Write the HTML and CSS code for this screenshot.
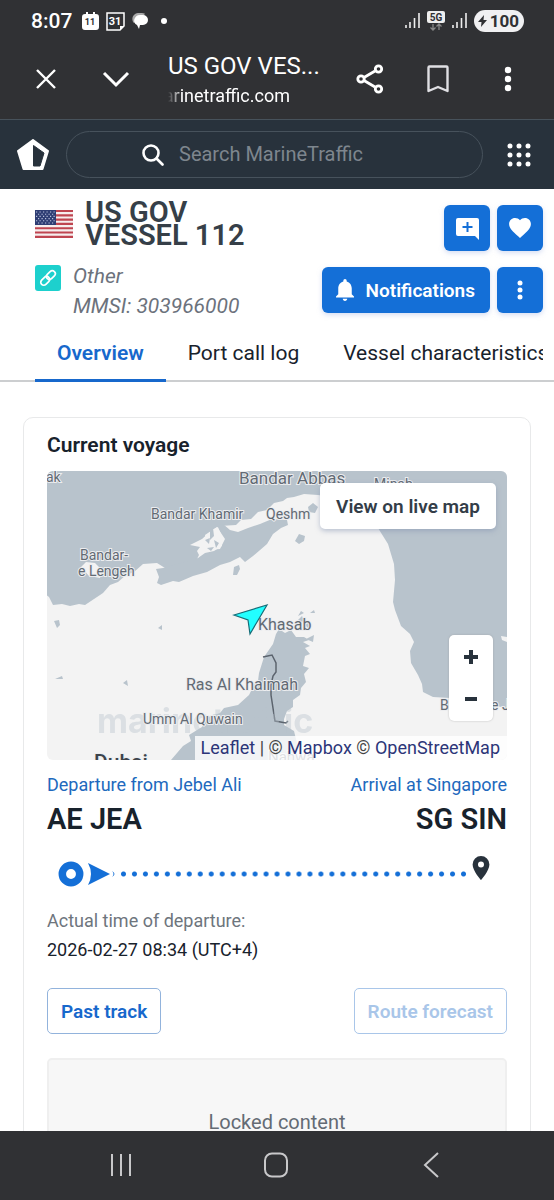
FILE: index.html
```html
<!DOCTYPE html>
<html lang="en">
<head>
<meta charset="utf-8">
<meta name="viewport" content="width=device-width, initial-scale=1">
<title>US GOV VESSEL 112</title>
<link rel="stylesheet" href="styles.css">
</head>
<body>
<div class="status">
  <span class="clock">8:07</span>
  <svg width="17" height="18" viewBox="0 0 17 18"><path fill="#fff" d="M3 2h1V0h2v2h5V0h2v2h1a3 3 0 0 1 3 3v10a3 3 0 0 1-3 3H3a3 3 0 0 1-3-3V5a3 3 0 0 1 3-3z"/><text x="8" y="13" text-anchor="middle" class="cal dark">11</text></svg>
  <svg width="19" height="19" viewBox="0 0 19 19"><path fill="none" stroke="#fff" stroke-width="1.5" d="M1 1h17v13l-4 4H1z"/><path fill="#fff" d="M18 14l-4 4v-4z"/><text x="9" y="13" text-anchor="middle" class="cal big">31</text></svg>
  <svg width="17" height="17" viewBox="0 0 17 17"><path fill="#aaa" d="M2 10C-1 7 0 1 6 0h4c2 0 3 1 3 1z"/><path fill="#fff" d="M8 2h3a5 5 0 0 1 0 10h-3l-1 4-2-4C0 10 2 2 8 2z"/></svg>
  <span class="dot"></span>
  <span class="spacer"></span>
  <svg width="15" height="16" viewBox="0 0 15 16" stroke="#eee" stroke-width="1.6"><path d="M1 12v3M5 9v6M9.500 5v10M14 0v15"/></svg>
  <svg width="18" height="20" viewBox="0 0 18 20"><rect width="18" height="12" rx="2" fill="#eee"/><text x="9" y="10" text-anchor="middle" class="net">5G</text><path fill="none" stroke="#888" stroke-width="1.3" d="M6 13v6M3.500 16.500 6 19l2.500-2.500M12 19v-6M9.500 15.500 12 13l2.500 2.500"/></svg>
  <svg width="15" height="16" viewBox="0 0 15 16" stroke="#eee" stroke-width="1.6"><path d="M1 12v3M5 9v6M9.500 5v10M14 0v15"/></svg>
  <span class="battery"><svg width="9" height="12" viewBox="0 0 9 12"><path fill="#303134" d="M6 0 0 7h3.500L3 12l6-7H5.500z"/></svg>100</span>
</div>
<div class="browser">
  <button class="bare" aria-label="Close"><svg width="22" height="22" viewBox="0 0 22 22"><path stroke="#fff" stroke-width="2.400" d="m2 2 18 18M20 2 2 20"/></svg></button>
  <button class="bare chevron" aria-label="Minimise"><svg width="28" height="18" viewBox="0 0 28 18"><path fill="none" stroke="#fff" stroke-width="3" d="m2 3 12 12L26 3"/></svg></button>
  <div class="site"><div class="site-title">US GOV VES...</div><div class="site-url">arinetraffic.com</div></div>
  <button class="bare" aria-label="Share"><svg width="28" height="30" viewBox="0 0 28 30" fill="none" stroke="#fff" stroke-width="2.800"><path d="M8 13.500 19 7M8 16.500 19 23"/><circle cx="5" cy="15" r="3.200"/><circle cx="22.500" cy="5" r="3.200"/><circle cx="22.500" cy="25" r="3.200"/></svg></button>
  <button class="bare bookmark" aria-label="Bookmark"><svg width="22" height="28" viewBox="0 0 22 28"><path fill="none" stroke="#dfdfe3" stroke-width="2.400" stroke-linejoin="round" d="M1.500 2.500q0-1 1-1h17q1 0 1 1v23.500l-9.500-4-9.500 4z"/></svg></button>
  <button class="bare more" aria-label="More"><svg width="8" height="26" viewBox="0 0 8 26" fill="#fff"><circle cx="4" cy="4" r="3.200"/><circle cx="4" cy="13" r="3.200"/><circle cx="4" cy="22" r="3.200"/></svg></button>
</div>
<header class="topbar">
  <a href="#" aria-label="Home" class="logo"><svg width="32" height="32" viewBox="0 0 32 32"><path fill="#fff" stroke="#fff" stroke-width="2" stroke-linejoin="round" d="M16 1 31 12l-5.500 18h-19L1 12z"/><path fill="#28323c" stroke="#28323c" stroke-linejoin="round" d="M16.500 6.500 27 14l-4 13h-6.500z"/></svg></a>
  <label class="search"><svg width="22" height="22" viewBox="0 0 22 22" fill="none" stroke="#fff" stroke-width="2.600"><circle cx="9" cy="9" r="7.500"/><path stroke-linecap="round" d="m14.500 14.500 6 6"/></svg><input type="search" placeholder="Search MarineTraffic" aria-label="Search MarineTraffic"></label>
  <button class="bare apps" aria-label="Apps"><svg width="24" height="24" viewBox="0 0 24 24"><path stroke="#fff" stroke-width="5" stroke-linecap="round" d="M3 3h0M12 3h0M21 3h0M3 12h0M12 12h0M21 12h0M3 21h0M12 21h0M21 21h0"/></svg></button>
</header>
<main>
  <section class="vessel">
    <div class="ident">
      <div class="name-row">
        <svg width="38" height="28" viewBox="0 0 38 28" role="img" aria-label="United States"><path fill="#f6eeee" d="M0 0h38v28H0z"/><path stroke="#bf4550" stroke-width="2.150" d="M0 1h38M0 5.300h38M0 9.600h38M0 13.900h38M0 18.200h38M0 22.500h38M0 26.900h38"/><path fill="#2f3e74" d="M0 0h21v15H0z"/><path stroke="#b9c1dc" stroke-width="1.100" stroke-dasharray="1.200 2.300" d="M1 2h19M3 4.200h17M1 6.400h19M3 8.600h17M1 10.800h19M3 13h17"/></svg>
        <h1>US GOV VESSEL 112</h1>
      </div>
      <div class="meta-row">
        <span class="type"><svg width="18" height="18" viewBox="0 0 18 18" fill="none" stroke="#fff" stroke-width="1.700"><g transform="rotate(-45 9 9)"><rect x="0" y="6" width="10" height="6" rx="3"/><rect x="8" y="6" width="10" height="6" rx="3"/></g></svg></span>
        <p>Other<br>MMSI: 303966000</p>
      </div>
    </div>
    <div class="actions">
      <div class="row"><button class="btn sq" aria-label="Add note"><svg width="23" height="23" viewBox="0 0 23 23"><path fill="#fff" d="M2 1h19q2 0 2 2v20l-4-4H2q-2 0-2-2V3q0-2 2-2z"/><path stroke="#146fd7" stroke-width="2" d="M11.500 5v10M6.500 10h10"/></svg></button><button class="btn sq" aria-label="Favourite"><svg width="22" height="20" viewBox="2 3 20 18.350"><path fill="#fff" d="m12 21.350-1.450-1.320C5.400 15.360 2 12.280 2 8.500 2 5.420 4.420 3 7.500 3c1.740 0 3.410.810 4.500 2.090C13.090 3.810 14.760 3 16.500 3 19.580 3 22 5.420 22 8.500c0 3.780-3.400 6.860-8.550 11.540z"/></svg></button></div>
      <div class="row"><button class="btn"><svg width="18" height="22" viewBox="4 2.500 16 19.500"><path fill="#fff" d="M12 22c1.100 0 2-.900 2-2h-4c0 1.100.890 2 2 2zm6-6v-5c0-3.070-1.640-5.640-4.500-6.320V4a1.500 1.500 0 0 0-3 0v.680C7.630 5.360 6 7.920 6 11v5l-2 2v1h16v-1z"/></svg>Notifications</button><button class="btn sq" aria-label="More actions"><svg width="6" height="20" viewBox="0 0 6 20" fill="#fff"><circle cx="3" cy="3" r="2.500"/><circle cx="3" cy="10" r="2.500"/><circle cx="3" cy="17" r="2.500"/></svg></button></div>
    </div>
  </section>
  <nav class="tabs"><div class="tab-list"><a href="#" class="active">Overview</a><a href="#">Port call log</a><a href="#">Vessel characteristics</a></div></nav>
  <article class="card">
    <h2>Current voyage</h2>
    <div class="map">
      <svg class="chart" viewBox="47 471 460 289" preserveAspectRatio="xMidYMid slice">
        <path fill="#f3f3f3" d="M47 471h460v289H47z"/>
        <g fill="#b8c3cc">
          <path d="M47 471H507V637l-6-1 1 4 5 2v66l-57-10-17-1-10-5-1-8-4-9-7-12-1-12 4-9-4-8-9-8-6-16-2-8 2-22-1-16-6-20-10-16-20-24-20-6-20-3-14-1-10 3-7 1-4 3-9 2-7 7-9 2-7 7-10 1-5 5-16 1-8 4-10 9-12 6 10 2-3 4 2 4-3 6-7 5-12 4-12-2-8-5-14 1-9 8-8 3-8 7-8 3-7 8-9 6-9 6-6-1-9 2-8-2-9 1-4-8-7-5H47z"/>
          <path d="m156 569 3 8-2 6 4 2 12-4 6 1 14-6 14-4 13-7 10-3 10-5 5 5 8-6 14-12 6-10 8-6 7-3-1-5-15-1-12 5-12 4-10 4-8-2-7-6-6 1 4 9 1 12-8 5-9 2-7 5-17 5-18 5zM234 567l5-2 1 4-3 6-4 0zM308 507l5-4 5 4-3 6-6-1zM295 541l4-7 6 2-1 5-5 3zM54 621l5-1 1 5-3 3zM158 628l4-3 0 5zM55 679l7-3 1 3zM123 683l4-3 1 6z"/>
          <path d="m171 760 12-14 8-5-2-6 13-8 6-10 12-4 4-5 14-3 11-10 6-12 3-2 1-8 5-16 9-13 3-10 3-5 6 4 6-3 5 7 8 0 5 3-6 2 7 4-5 2 5 6-5 2-2 10 6 2-5 6 2 8-5 6-1 7-7 5 0 7-6 4-3 8 0 6 10 6 3 12v22zM294 624l8-8 2 4-5 5zM305 625l4-3v7zM306 639l8-4-1 7zM310 613l4-3 1 3zM298 616l3-5 3 2z"/>
        </g>
        <path fill="#f3f3f3" d="m81 567 5-5 9 1 7 7-2 8-11-2zM205 535l12-8 8 12-5 10-13 1z"/>
        <g fill="#b8c3cc"><path d="m210 531 3-3 1 8-4 4zM205 540l5-2-1 6zM214 540l5 3-3 5zM207 548l7-1-3 4z"/></g>
        <path fill="none" stroke="#5c646e" stroke-width="1.500" d="m263 657 9-2 4 8 0 9-3 4-2 9 0 10 4 26 11 2 2-2"/>
        <text class="mark" x="97" y="733">marinetraffic</text>
        <g class="labels">
          <text x="46" y="482" font-size="14">ak</text>
          <text x="239" y="484" font-size="17">Bandar Abbas</text>
          <text x="374" y="489" font-size="14">Minab</text>
          <text x="151" y="519" font-size="14">Bandar Khamir</text>
          <text x="266" y="519" font-size="14">Qeshm</text>
          <text x="80" y="560" font-size="14">Bandar-</text>
          <text x="78" y="576" font-size="14">e Lengeh</text>
          <text x="258" y="630" font-size="16">Khasab</text>
          <text x="186" y="690" font-size="16">Ras Al Khaimah</text>
          <text x="143" y="724" font-size="14">Umm Al Quwain</text>
          <text x="440" y="710" font-size="14">B</text>
          <text x="491" y="710" font-size="14">e J</text>
          <text x="94" y="769" font-size="21" class="city">Dubai</text>
          <text x="268" y="762" font-size="15">Nahwa</text>
        </g>
        <path fill="#2ff" stroke="#176d78" stroke-width="1.200" d="m234 615 33-10-17 29-2-14z"/>
      </svg>
      <button class="live">View on live map</button>
      <div class="zoom"><button aria-label="Zoom in"><svg width="14" height="14" viewBox="0 0 14 14"><path stroke="#28323c" stroke-width="4" d="M7 0v14M0 7h14"/></svg></button><button aria-label="Zoom out"><svg width="14" height="14" viewBox="0 0 14 14"><path stroke="#28323c" stroke-width="4" d="M1 6h12"/></svg></button></div>
      <div class="credit"><a href="#">Leaflet</a> | © <a href="#">Mapbox</a> © <a href="#">OpenStreetMap</a></div>
    </div>
    <div class="split links"><a href="#">Departure from Jebel Ali</a><a href="#">Arrival at Singapore</a></div>
    <div class="split ports"><span>AE JEA</span><span>SG SIN</span></div>
    <div class="route">
      <svg width="26" height="26" viewBox="0 0 26 26"><circle cx="13" cy="13" r="8.700" fill="none" stroke="#146fd7" stroke-width="7.500"/></svg>
      <svg width="27" height="22" viewBox="0 0 27 22"><path fill="#146fd7" d="m0 0 22 11L0 22q6-11 0-22zM24 8q5 3 0 6 3-3 0-6z"/></svg>
      <span class="dots"></span>
      <svg class="pin" width="18" height="24" viewBox="5 2 14 20"><path fill="#28323c" d="M12 2a7 7 0 0 0-7 7c0 5.250 7 13 7 13s7-7.750 7-13a7 7 0 0 0-7-7zm0 9.500a2.500 2.500 0 1 1 0-5 2.500 2.500 0 0 1 0 5z"/></svg>
    </div>
    <p class="label">Actual time of departure:</p>
    <p class="time">2026-02-27 08:34 (UTC+4)</p>
    <div class="split tracks"><button class="outline">Past track</button><button class="outline" disabled>Route forecast</button></div>
    <div class="locked">Locked content</div>
  </article>
</main>
<footer class="system">
  <button class="bare" aria-label="Recents"><svg width="22" height="22" viewBox="0 0 22 22"><path stroke="#c8c8ca" stroke-width="2" d="M2 0v22M11 0v22M20 0v22"/></svg></button>
  <button class="bare" aria-label="Home"><svg width="24" height="26" viewBox="0 0 24 26"><rect x="1" y="1.500" width="22" height="23" rx="7" fill="none" stroke="#c8c8ca" stroke-width="2"/></svg></button>
  <button class="bare" aria-label="Back"><svg width="16" height="26" viewBox="0 0 16 26"><path fill="none" stroke="#c8c8ca" stroke-width="2" d="M15 1 2 13l13 12"/></svg></button>
</footer>
</body>
</html>
```
FILE: styles.css
```css
* { box-sizing: border-box; }
body {
  margin: 0;
  height: 100vh;
  display: flex;
  flex-direction: column;
  overflow: hidden;
  background: #fff;
  color: #18222c;
  font-family: Roboto, "Noto Sans", sans-serif;
  font-size: 18px;
}
h1, h2, p { margin: 0; }
a { color: inherit; text-decoration: none; }
button, input { font: inherit; }
svg { display: block; flex: none; }
.bare {
  flex: none;
  display: flex;
  align-items: center;
  justify-content: center;
  width: 40px;
  height: 40px;
  padding: 0;
  border: 0;
  background: none;
}

.status {
  flex: none;
  display: flex;
  align-items: center;
  gap: 7px;
  height: 42px;
  padding: 0 30px 0 31px;
  background: #303134;
  color: #fff;
}
.clock { font-size: 21px; font-weight: 500; margin-right: 3px; }
.dot { width: 6px; height: 6px; margin-left: 5px; border-radius: 50%; background: #fff; }
.spacer { flex: 1; }
.cal { font-size: 9px; font-weight: 700; fill: #fff; }
.cal.dark { fill: #303134; }
.cal.big { font-size: 11px; }
.net { font-size: 10px; font-weight: 700; fill: #303134; }
.battery {
  display: flex;
  align-items: center;
  gap: 3px;
  height: 22px;
  padding: 0 5px 0 4px;
  border-radius: 11px;
  background: #f0f0f2;
  color: #303134;
  font-size: 17px;
  font-weight: 700;
}

.browser {
  flex: none;
  display: flex;
  align-items: center;
  height: 78px;
  padding: 0 26px;
  padding-bottom: 4px;
  border-bottom: 1px solid #47525b;
  background: #303134;
  color: #fff;
}
.chevron { margin-left: 30px; }
.site { flex: 1; min-width: 0; margin: 0 19px 0 32px; padding-top: 3px; white-space: nowrap; }
.site-title { font-size: 24px; line-height: 32px; }
.site-url {
  width: 122px;
  overflow: hidden;
  direction: rtl;
  font-size: 18px;
  line-height: 28px;
  mask-image: linear-gradient(to right, transparent, #000 14px);
}
.bookmark { margin-left: 28px; }
.more { margin-left: 30px; }

.topbar {
  flex: none;
  display: flex;
  align-items: center;
  gap: 17px;
  height: 69px;
  padding: 0 16px 0 17px;
  background: #28323c;
}
.apps { width: 38px; }
.search {
  flex: 1;
  display: flex;
  align-items: center;
  gap: 15px;
  height: 47px;
  min-width: 0;
  padding: 0 18px 0 75px;
  border: 1px solid #47525c;
  border-radius: 24px;
}
.search input {
  flex: 1;
  min-width: 0;
  padding: 0 0 2px;
  border: 0;
  outline: 0;
  background: none;
  color: #fff;
  font-size: 20px;
}
.search input::placeholder { color: #7e868e; opacity: 1; }

main { flex: 1; min-height: 0; overflow: hidden; }
.vessel {
  display: flex;
  justify-content: space-between;
  padding: 12px 11px 0 35px;
}
.name-row { display: flex; align-items: center; gap: 12px; }
h1 { width: 165px; color: #363f48; font-size: 29px; line-height: 23px; font-weight: 600; }
.meta-row { display: flex; gap: 12px; margin-top: 14px; }
.type {
  display: flex;
  align-items: center;
  justify-content: center;
  width: 26px;
  height: 26px;
  margin-top: 4px;
  border-radius: 3px;
  background: #1dd0cd;
}
.meta-row p { color: #6c727c; font-size: 21px; line-height: 30px; font-style: italic; }
.actions { display: flex; flex-direction: column; gap: 16px; padding-top: 4px; }
.row { display: flex; justify-content: flex-end; gap: 7px; }
.btn {
  display: flex;
  align-items: center;
  justify-content: center;
  gap: 12px;
  height: 46px;
  padding: 0 15px 0 14px;
  border: 0;
  border-radius: 6px;
  background: #146fd7;
  box-shadow: 0 2px 5px #aebde880;
  color: #fff;
  font-size: 19px;
  font-weight: 600;
}
.sq { width: 46px; padding: 0; }

.tabs { height: 60px; margin-top: 1px; padding: 0 11px 0 35px; border-bottom: 2px solid #ccced0; }
.tab-list { display: flex; height: 60px; overflow: hidden; white-space: nowrap; font-size: 21px; }
.tab-list a { flex: none; padding: 16px 22px 0; line-height: 30px; }
.tab-list .active { color: #1768cc; font-weight: 600; border-bottom: 3px solid #1768cc; }

.card {
  margin: 35px 23px 0;
  padding: 15px 23px 40px;
  border: 1px solid #e8e9ea;
  border-radius: 10px;
}
h2 { font-size: 21px; line-height: 24px; font-weight: 600; }
.map {
  position: relative;
  height: 289px;
  margin-top: 14px;
  overflow: hidden;
  border-radius: 6px;
}
.chart { width: 100%; height: 100%; }
.labels { fill: #626a74; stroke: #ecedef; stroke-width: 2px; paint-order: stroke; }
.city { fill: #3c434b; font-weight: 500; }
.mark { fill: #b8c3cc; opacity: .4; font-family: Inter, Roboto, sans-serif; font-size: 34px; font-weight: 700; }
.live {
  position: absolute;
  top: 12px;
  right: 11px;
  height: 46px;
  padding: 0 16px;
  border: 0;
  border-radius: 5px;
  background: #fff;
  box-shadow: 0 2px 5px #8090b080;
  color: #333d48;
  font-size: 19px;
  font-weight: 600;
}
.zoom {
  position: absolute;
  right: 14px;
  bottom: 39px;
  width: 44px;
  border-radius: 5px;
  background: #fff;
  box-shadow: 0 0 2px #8888;
}
.zoom button {
  display: flex;
  align-items: center;
  justify-content: center;
  width: 44px;
  height: 43px;
  padding: 0;
  border: 0;
  background: none;
}
.credit {
  position: absolute;
  right: 0;
  bottom: 0;
  padding: 0 7px 0 5px;
  background: #fffc;
  color: #444;
  line-height: 24px;
}
.credit a { color: #2c3578; }

.split { display: flex; justify-content: space-between; }
.links { margin-top: 13px; color: #2169bd; line-height: 24px; }
.ports { margin-top: 4px; font-size: 29px; line-height: 36px; font-weight: 600; }
.route { display: flex; align-items: center; height: 26px; margin-top: 24px; padding: 0 17px 0 11px; }
.route svg + svg { margin-left: 4px; }
.dots {
  flex: 1;
  height: 6px;
  margin: 0 3px 0 3px;
  background: radial-gradient(circle, #146fd7 2px, #146fd700 3px) 0 0 / 11px 6px round;
}
.pin { align-self: flex-start; margin-top: -5px; }
.label { margin-top: 22px; color: #6e757d; line-height: 24px; }
.time { margin-top: 5px; line-height: 24px; }
.tracks { margin-top: 26px; }
.outline {
  height: 46px;
  padding: 0 13px;
  border: 1px solid #92b3dc;
  border-radius: 5px;
  background: #fff;
  color: #1768cc;
  font-size: 19px;
  font-weight: 600;
}
.outline:disabled { border-color: #a9c6e9; color: #a9c6e9; }
.locked {
  height: 160px;
  margin-top: 24px;
  padding-top: 50px;
  border: 2px solid #efefef;
  border-radius: 5px;
  background: #f7f7f7;
  color: #646b74;
  font-size: 20px;
  line-height: 24px;
  text-align: center;
}

.system {
  flex: none;
  display: flex;
  align-items: center;
  justify-content: space-between;
  height: 69px;
  padding: 0 103px 2px 101px;
  background: #303134;
}
```
